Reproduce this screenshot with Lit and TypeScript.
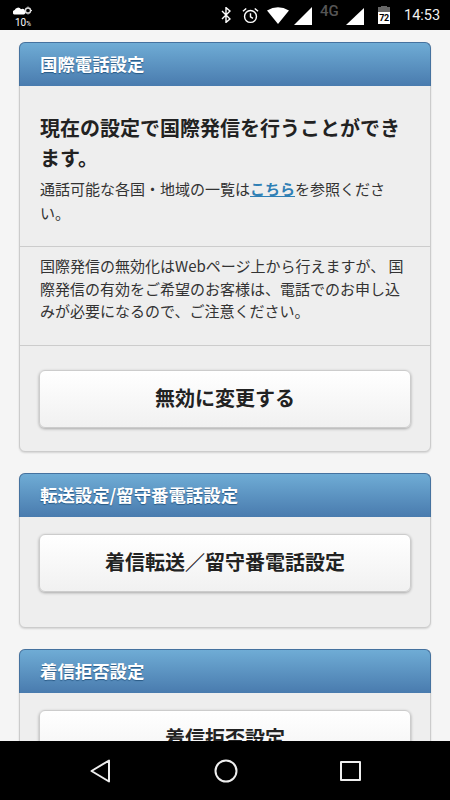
import { LitElement, html, css } from "lit";
import { customElement } from "lit/decorators.js";

@customElement("app-root")
export class AppRoot extends LitElement {
  static styles = css`
    :host { display: block; width: 450px; height: 800px; overflow: hidden; font-family: "Noto Sans CJK JP", "Liberation Sans", sans-serif; color: #222; }
    .screen { width: 450px; height: 800px; display: flex; flex-direction: column; background: #f5f5f5; }
    .status { height: 30px; flex: none; background: #000; color: #fff; display: flex; align-items: flex-start; }
    .weather { margin: 6px 0 0 13px; width: 22px; display: flex; flex-direction: column; align-items: flex-start; }
    .weather svg { display: block; }
    .weather span { font: 10px/10px Roboto, sans-serif; margin: 2px 0 0 2px; }
    .weather small { font-size: 6.5px; }
    .status-right { margin-left: auto; display: flex; align-items: flex-start; height: 30px; }
    .status-right svg { display: block; flex: none; }
    .bt { margin: 7px 11px 0 0; }
    .alarm { margin: 7px 8px 0 0; }
    .wifi { margin: 7px 5px 0 0; }
    .sig1 { margin: 7px 8px 0 0; }
    .net { font: 500 15px/12px Roboto, sans-serif; color: #555; margin: 5px 6px 0 0; width: 20px; }
    .sig2 { margin: 8px 14px 0 0; }
    .batt { width: 12px; height: 17px; margin: 7px 14px 0 0; background: linear-gradient(#666 0 5px, #fff 5px); color: #000; font: 700 9px/12px Roboto, sans-serif; padding-top: 5px; box-sizing: border-box; text-align: center; letter-spacing: -0.5px; position: relative; }
    .batt::before { content: ""; position: absolute; top: -1px; left: 3px; width: 6px; height: 1px; background: #666; }
    .time { font: 400 14.500px/30px Roboto, sans-serif; margin: 1px 10px 0 0; width: 36px; color: #f2f2f2; white-space: nowrap; }
    .content { flex: 1; min-height: 0; overflow: hidden; padding: 12px 19px 0; }
    .panel { background: #eee; border: 1px solid #ccc; border-radius: 6px; box-shadow: 0 1px 2px rgba(0,0,0,.14); margin-bottom: 21px; }
    .head { height: 44px; margin: -1px -1px 0; padding: 0 20px; box-sizing: border-box; border: 1px solid #45729f; border-bottom: 0; border-radius: 6px 6px 0 0; background: linear-gradient(#6facd5, #497bae); color: #fff; font-size: 17.400px; font-weight: 700; line-height: 42px; text-shadow: 0 1px 1px #2a5a86; }
    .intro { padding: 27px 20px 21px 20px; }
    h2 { margin: 0; font-size: 20px; line-height: 30px; font-weight: 700; color: #222; }
    .intro p { margin: 4px 0 0; font-size: 15px; line-height: 24px; max-width: 350px; color: #333; }
    a { color: #2f7fb5; font-weight: 700; text-decoration: underline; }
    .note { border-top: 1px solid #ccc; border-bottom: 1px solid #ccc; padding: 8px 20px 22.500px; font-size: 15px; line-height: 22.500px; color: #333; }
    .btnwrap { padding: 24px 19px 23px; }
    .btnwrap.second { padding: 17px 19px 35px; }
    .btn { height: 58px; box-sizing: border-box; border: 1px solid #ccc; border-radius: 6px; padding-bottom: 3px; background: linear-gradient(#fff, #f1f1f1); box-shadow: 0 1px 3px rgba(0,0,0,.3); display: flex; align-items: center; justify-content: center; font-size: 20px; font-weight: 700; color: #222; }
    .nav { height: 59px; flex: none; background: #000; display: flex; align-items: flex-start; padding-left: 90px; }
    .nav svg { display: block; flex: none; margin-top: 18px; }
    .nav .home { margin-left: 103px; }
    .nav .recent { margin: 20px 0 0 102px; }
  `;

  render() {
    return html`<div class="screen">
      <div class="status">
        <div class="weather">
          <svg width="20" height="10" viewBox="0 0 20 10"><path fill="#fff" d="M1.500 8.500a2.300 2.300 0 0 1 .2-4.500A3.500 3.500 0 0 1 8 3.300a2.700 2.700 0 0 1 3 5.200z"/><circle cx="15" cy="4.500" r="2.600" fill="none" stroke="#ddd" stroke-width="1.500"/><path d="M15 .5v1M15 7.500v1M11 4.500h1M18 4.500h1" stroke="#ddd" stroke-width="1"/></svg>
          <span>10<small>%</small></span>
        </div>
        <div class="status-right">
          <svg class="bt" width="10" height="16" viewBox="0 0 10 16" fill="none" stroke="#fff" stroke-width="1.400"><path d="M1 4l8 8-4 3.400V.6L9 4l-8 8"/></svg>
          <svg class="alarm" width="17" height="17" viewBox="0 0 18 18" fill="none" stroke="#fff" stroke-width="1.500"><circle cx="9" cy="10" r="6.300"/><path d="M9 6.500v4l2.600 1.600M1 4.500l3.500-3M17 4.500l-3.500-3"/></svg>
          <svg class="wifi" width="22" height="17" viewBox="0 0 22 17"><path fill="#fff" d="M0 3.500Q11-3 22 3.500L11 17z"/></svg>
          <svg class="sig1" width="18" height="18" viewBox="0 0 18 18"><path fill="#fff" d="M0 18L18 0v18z"/></svg>
          <span class="net">4G</span>
          <svg class="sig2" width="18" height="17" viewBox="0 0 18 17"><path fill="#fff" d="M0 17L18 0v17z"/></svg>
          <div class="batt">72</div>
          <span class="time">14:53</span>
        </div>
      </div>
      <div class="content">
        <section class="panel">
          <div class="head">国際電話設定</div>
          <div class="intro">
            <h2>現在の設定で国際発信を行うことができます。</h2>
            <p>通話可能な各国・地域の一覧は<a>こちら</a>を参照ください。</p>
          </div>
          <div class="note">国際発信の無効化はWebページ上から行えますが、 国際発信の有効をご希望のお客様は、電話でのお申し込みが必要になるので、ご注意ください。</div>
          <div class="btnwrap"><div class="btn">無効に変更する</div></div>
        </section>
        <section class="panel">
          <div class="head">転送設定/留守番電話設定</div>
          <div class="btnwrap second"><div class="btn">着信転送／留守番電話設定</div></div>
        </section>
        <section class="panel">
          <div class="head">着信拒否設定</div>
          <div class="btnwrap second"><div class="btn">着信拒否設定</div></div>
        </section>
      </div>
      <div class="nav">
        <svg width="21" height="24" viewBox="0 0 21 24" fill="none" stroke="#eee" stroke-width="2" stroke-linejoin="round"><path d="M19 1.500V22.500L1.500 12z"/></svg>
        <svg class="home" width="24" height="24" viewBox="0 0 24 24" fill="none" stroke="#eee" stroke-width="2"><circle cx="12" cy="12" r="10.500"/></svg>
        <svg class="recent" width="21" height="20" viewBox="0 0 21 20" fill="none" stroke="#eee" stroke-width="2" stroke-linejoin="round"><rect x="1" y="1" width="19" height="18"/></svg>
      </div>
    </div>`;
  }
}
